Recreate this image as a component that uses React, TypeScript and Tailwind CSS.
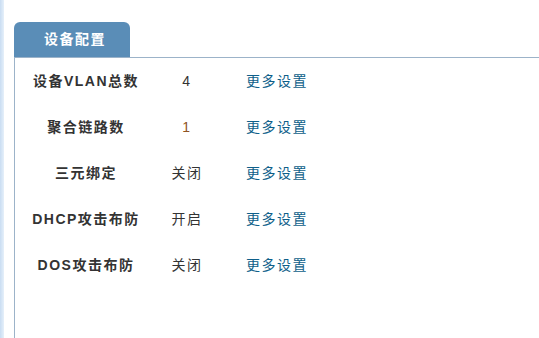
import React from 'react';

const rows = [
  { label: '设备VLAN总数', value: '4', tone: 'text-[#333333]' },
  { label: '聚合链路数', value: '1', tone: 'text-[#8f5424]' },
  { label: '三元绑定', value: '关闭', tone: 'text-[#333333]' },
  { label: 'DHCP攻击布防', value: '开启', tone: 'text-[#333333]' },
  { label: 'DOS攻击布防', value: '关闭', tone: 'text-[#333333]' },
];

export default function App() {
  return (
    <div
      className="flex w-[539px] h-[338px] bg-white overflow-hidden"
      style={{ fontFamily: '"Liberation Sans", "Noto Sans CJK SC", sans-serif' }}
    >
      {/* left frame strip */}
      <div className="w-[4px] h-full bg-gradient-to-r from-[#c9ddf2] to-[#e6f0fa]" />

      <div className="flex-1 flex flex-col pl-[10px] pt-[22px]">
        {/* tab header */}
        <div className="flex border-b border-[#9cb3c9]">
          <div className="w-[116px] h-[35px] rounded-t-[6px] bg-[#5a8db7] flex items-center justify-center text-white text-[14px] font-bold tracking-[1.5px] pl-[6px]">
            设备配置
          </div>
        </div>

        {/* body */}
        <div className="flex-1 border-l border-[#9cb3c9]">
          {rows.map((r) => (
            <div key={r.label} className="flex items-center h-[46px] text-[14px] tracking-[1.5px]">
              <div className="w-[140px] text-center font-bold text-[#333333] pl-[2px]">{r.label}</div>
              <div className={`w-[62px] text-center pl-[2px] ${r.tone}`}>{r.value}</div>
              <div className="pl-[29px] text-[#0e5f8a]">更多设置</div>
            </div>
          ))}
        </div>
      </div>
    </div>
  );
}
